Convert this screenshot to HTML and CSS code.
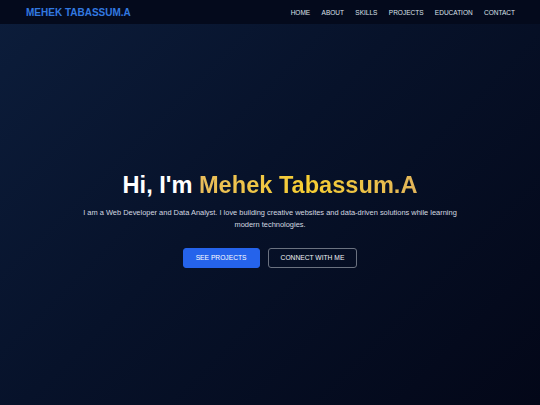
FILE: index.html
```html
<!DOCTYPE html>
<html lang="en">
<head>
<meta charset="utf-8">
<title>Mehek Tabassum.A</title>
<link rel="stylesheet" href="styles.css">
</head>
<body>
<header class="navbar">
  <div class="logo">MEHEK TABASSUM.A</div>
  <nav class="nav-links">
    <a href="#">HOME</a>
    <a href="#">ABOUT</a>
    <a href="#">SKILLS</a>
    <a href="#">PROJECTS</a>
    <a href="#">EDUCATION</a>
    <a href="#">CONTACT</a>
  </nav>
</header>
<main class="hero">
  <h1 class="hero-title">Hi, I'm <span class="name">Mehek Tabassum.A</span></h1>
  <p class="hero-text">I am a Web Developer and Data Analyst. I love building creative websites and data-driven solutions while learning modern technologies.</p>
  <div class="hero-buttons">
    <a href="#" class="btn btn-primary">SEE PROJECTS</a>
    <a href="#" class="btn btn-outline">CONNECT WITH ME</a>
  </div>
</main>
</body>
</html>
```
FILE: styles.css
```css
* { box-sizing: border-box; }
html, body { margin: 0; padding: 0; }
body {
  font-family: "Liberation Sans", Arial, sans-serif;
  min-height: 405px;
  background: linear-gradient(135deg, #0c1d3b 0%, #07122a 45%, #030718 100%);
  color: #fff;
}
.navbar {
  height: 24px;
  display: flex;
  align-items: center;
  justify-content: space-between;
  padding: 0 25px 0 26px;
  background: #040a1c;
}
.logo {
  font-size: 10px;
  font-weight: bold;
  color: #3279e0;
}
.nav-links {
  display: flex;
  gap: 11.4px;
}
.nav-links a {
  font-size: 6.5px;
  color: #dde2ea;
  text-decoration: none;
}
.hero {
  min-height: 381px;
  display: flex;
  flex-direction: column;
  align-items: center;
  justify-content: center;
  text-align: center;
  padding-top: 10px;
}
.hero-title {
  margin: 0;
  font-size: 23.6px;
  line-height: 28px;
  font-weight: bold;
  color: #fff;
}
.name {
  background: linear-gradient(90deg, #e9bd5c 0%, #f7cf33 50%, #e2b55a 100%);
  -webkit-background-clip: text;
  background-clip: text;
  color: transparent;
}
.hero-text {
  margin: 8px 0 0;
  max-width: 380px;
  font-size: 7.45px;
  line-height: 12px;
  color: #d3d8e0;
}
.hero-buttons {
  margin-top: 17px;
  display: flex;
  gap: 8px;
}
.btn {
  display: inline-block;
  height: 20px;
  line-height: 18px;
  padding: 0 12px;
  border-radius: 3px;
  font-size: 6.7px;
  text-decoration: none;
  color: #fff;
  border: 1px solid transparent;
}
.btn-primary {
  background: #2563eb;
  border-color: #2563eb;
}
.btn-outline {
  border-color: #6b7280;
  color: #f1f3f6;
}
```
